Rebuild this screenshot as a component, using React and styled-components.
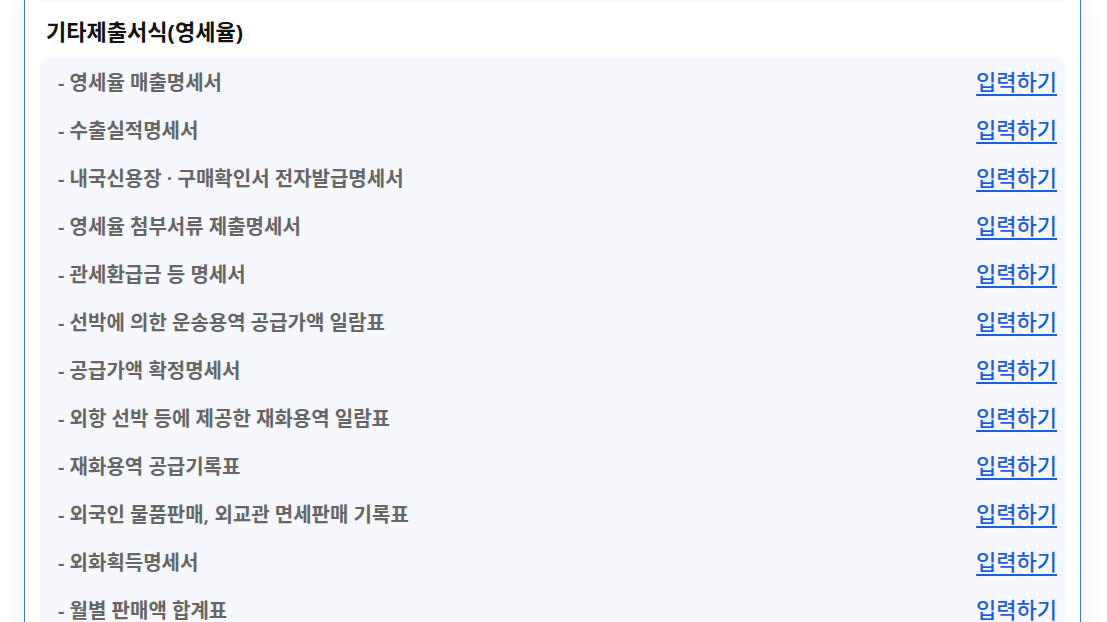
import React from "react";
import styled, { createGlobalStyle } from "styled-components";

const Global = createGlobalStyle`
  html, body { margin: 0; padding: 0; background: #ffffff; }
  body { font-family: "Noto Sans", "Noto Sans CJK KR", sans-serif; overflow: hidden; }
`;

const Page = styled.div`
  padding: 0 26px 0 24px;
  height: 622px;
  overflow: hidden;
`;

const Panel = styled.section`
  border-left: 1px solid #3a78e0;
  border-right: 1px solid #3a78e0;
  background: #fff;
  box-shadow: 0 0 24px rgba(0, 0, 0, 0.07);
  padding: 0 15px;
  min-height: 700px;
`;

const PrevBox = styled.div`
  height: 2px;
  background: #f8f9fb;
  border-radius: 0 0 6px 6px;
  margin-right: 1px;
`;

const Title = styled.h3`
  margin: 0;
  padding: 15px 0 12px 6px;
  font-size: 22px;
  line-height: 29px;
  font-weight: 700;
  color: #111;
`;

const List = styled.ul`
  list-style: none;
  margin: 0;
  padding: 0 8px 0 18px;
  background: #f7f8fd;
  border-radius: 6px;
`;

const Row = styled.li`
  display: flex;
  align-items: center;
  justify-content: space-between;
  height: 48px;
`;

const Label = styled.span`
  font-size: 20px;
  font-weight: 600;
  color: #666;
  padding-bottom: 1px;
`;

const Link = styled.a`
  font-size: 22px;
  font-weight: 500;
  color: #1d5fd9;
  text-decoration: underline;
  text-decoration-thickness: 2px;
  text-underline-offset: 4px;
  cursor: pointer;
  padding-bottom: 4px;
`;

const items = [
  "영세율 매출명세서",
  "수출실적명세서",
  "내국신용장 · 구매확인서 전자발급명세서",
  "영세율 첨부서류 제출명세서",
  "관세환급금 등 명세서",
  "선박에 의한 운송용역 공급가액 일람표",
  "공급가액 확정명세서",
  "외항 선박 등에 제공한 재화용역 일람표",
  "재화용역 공급기록표",
  "외국인 물품판매, 외교관 면세판매 기록표",
  "외화획득명세서",
  "월별 판매액 합계표",
];

export default function App() {
  return (
    <>
      <Global />
      <Page>
        <Panel>
          <PrevBox />
          <Title>기타제출서식(영세율)</Title>
          <List>
            {items.map((t) => (
              <Row key={t}>
                <Label>- {t}</Label>
                <Link>입력하기</Link>
              </Row>
            ))}
          </List>
        </Panel>
      </Page>
    </>
  );
}
